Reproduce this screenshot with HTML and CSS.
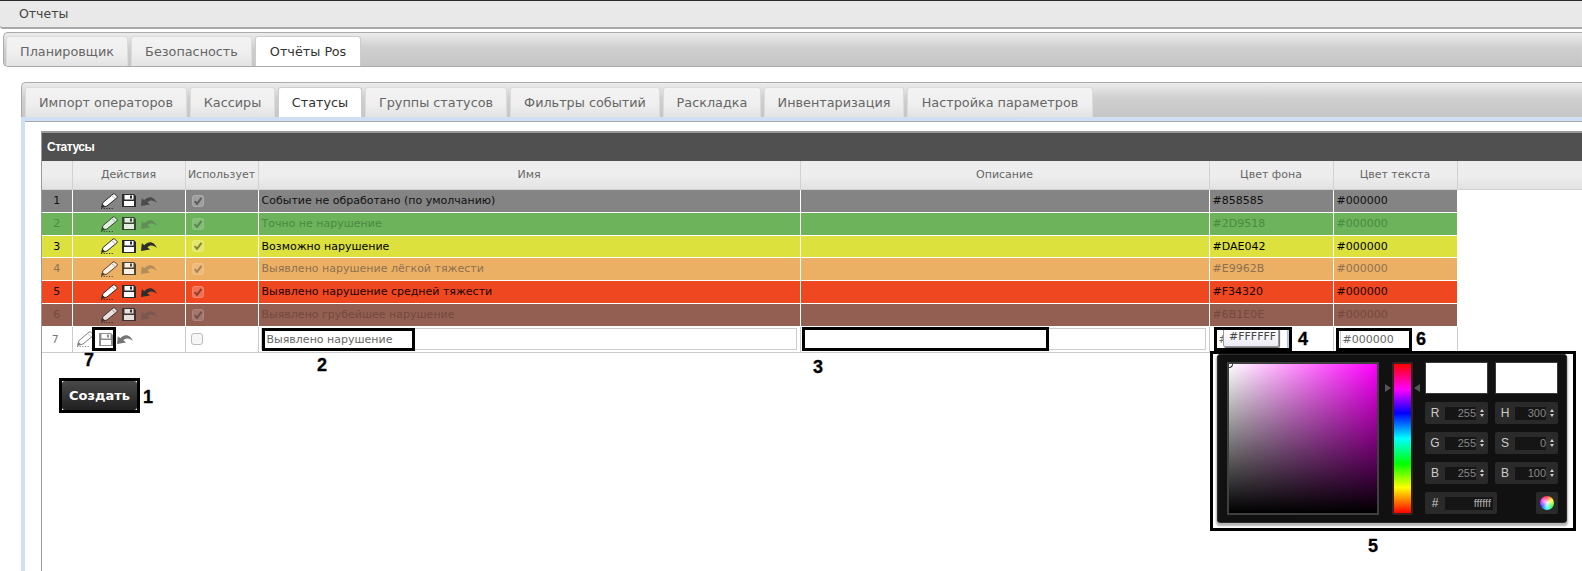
FILE: index.html
```html
<!DOCTYPE html>
<html lang="ru">
<head>
<meta charset="utf-8">
<title>Отчеты</title>
<link rel="stylesheet" href="styles.css">
</head>
<body>
<svg class="defs" width="0" height="0" aria-hidden="true">
  <symbol id="pencil" viewBox="0 0 17 15">
    <path d="M1.500 13.500 2.800 9 12.400.9l1.100-.3 2.800 2.800-.3 1.100L6.500 12.300Z" fill="#fff" stroke="#222" stroke-width=".9"/>
    <path d="M11 2.300l3.400 3" stroke="#999" stroke-width=".8"/>
    <path d="M1 14.500h12" stroke="#222" stroke-width="1" stroke-dasharray="1 1.500"/>
    <path d="M1.500 13.500 2.500 10.500 4.800 12.500Z" fill="#222"/>
  </symbol>
  <symbol id="floppy" viewBox="0 0 14 13">
    <path d="M0 0h12l2 2v11H0Z" fill="currentColor"/>
    <rect x="2.500" y="1" width="9" height="4.500" fill="#fff"/>
    <rect x="8" y="1.500" width="2" height="3" fill="currentColor"/>
    <rect x="2" y="7" width="10" height="5" fill="#fff"/>
  </symbol>
  <symbol id="undo" viewBox="0 0 16 10">
    <path d="M0 10 .8 2.200 3.400 4.200C6 1 12-1.500 16 7c-3-3-7-3.400-9.600-.8L9 8.400Z" fill="currentColor"/>
  </symbol>
  <symbol id="check" viewBox="0 0 12 12">
    <rect x="0.500" y="0.500" width="11" height="11" rx="2" fill="#fff" fill-opacity=".22" stroke="#fff" stroke-opacity=".25"/>
    <path d="M2.700 6.200 5 8.800 9.500 2.800" fill="none" stroke="#000" stroke-opacity=".42" stroke-width="2"/>
  </symbol>
</svg>

<header class="menubar">Отчеты</header>

<nav class="tabs tabs-outer">
  <a class="tab tab-planner">Планировщик</a>
  <a class="tab tab-security">Безопасность</a>
  <a class="tab tab-pos active">Отчёты Pos</a>
</nav>

<main class="workspace">
  <nav class="tabs tabs-inner">
    <a class="tab t1">Импорт операторов</a>
    <a class="tab t2">Кассиры</a>
    <a class="tab t3 active">Статусы</a>
    <a class="tab t4">Группы статусов</a>
    <a class="tab t5">Фильтры событий</a>
    <a class="tab t6">Раскладка</a>
    <a class="tab t7">Инвентаризация</a>
    <a class="tab t8">Настройка параметров</a>
  </nav>

  <section class="panel">
    <div class="card">
      <h2 class="card-title">Статусы</h2>
      <table class="grid">
        <colgroup>
          <col class="c-num"><col class="c-act"><col class="c-use"><col class="c-name"><col class="c-desc"><col class="c-bg"><col class="c-fg"><col class="c-rest">
        </colgroup>
        <thead>
          <tr><th></th><th>Действия</th><th>Использует</th><th>Имя</th><th>Описание</th><th>Цвет фона</th><th>Цвет текста</th><th></th></tr>
        </thead>
        <tbody>
          <tr class="r r1">
            <td class="num">1</td>
            <td class="acts"><svg class="i-pencil"><use href="#pencil"/></svg><svg class="i-floppy"><use href="#floppy"/></svg><svg class="i-undo"><use href="#undo"/></svg></td>
            <td><svg class="chk"><use href="#check"/></svg></td>
            <td>Событие не обработано (по умолчанию)</td><td></td><td>#858585</td><td>#000000</td><td class="blank"></td>
          </tr>
          <tr class="r r2 faded">
            <td class="num">2</td>
            <td class="acts"><svg class="i-pencil"><use href="#pencil"/></svg><svg class="i-floppy"><use href="#floppy"/></svg><svg class="i-undo"><use href="#undo"/></svg></td>
            <td><svg class="chk"><use href="#check"/></svg></td>
            <td>Точно не нарушение</td><td></td><td>#2D9518</td><td>#000000</td><td class="blank"></td>
          </tr>
          <tr class="r r3">
            <td class="num">3</td>
            <td class="acts"><svg class="i-pencil"><use href="#pencil"/></svg><svg class="i-floppy"><use href="#floppy"/></svg><svg class="i-undo"><use href="#undo"/></svg></td>
            <td><svg class="chk"><use href="#check"/></svg></td>
            <td>Возможно нарушение</td><td></td><td>#DAE042</td><td>#000000</td><td class="blank"></td>
          </tr>
          <tr class="r r4 faded">
            <td class="num">4</td>
            <td class="acts"><svg class="i-pencil"><use href="#pencil"/></svg><svg class="i-floppy"><use href="#floppy"/></svg><svg class="i-undo"><use href="#undo"/></svg></td>
            <td><svg class="chk"><use href="#check"/></svg></td>
            <td>Выявлено нарушение лёгкой тяжести</td><td></td><td>#E9962B</td><td>#000000</td><td class="blank"></td>
          </tr>
          <tr class="r r5">
            <td class="num">5</td>
            <td class="acts"><svg class="i-pencil"><use href="#pencil"/></svg><svg class="i-floppy"><use href="#floppy"/></svg><svg class="i-undo"><use href="#undo"/></svg></td>
            <td><svg class="chk"><use href="#check"/></svg></td>
            <td>Выявлено нарушение средней тяжести</td><td></td><td>#F34320</td><td>#000000</td><td class="blank"></td>
          </tr>
          <tr class="r r6 faded">
            <td class="num">6</td>
            <td class="acts"><svg class="i-pencil"><use href="#pencil"/></svg><svg class="i-floppy"><use href="#floppy"/></svg><svg class="i-undo"><use href="#undo"/></svg></td>
            <td><svg class="chk"><use href="#check"/></svg></td>
            <td>Выявлено грубейшее нарушение</td><td></td><td>#6B1E0E</td><td>#000000</td><td class="blank"></td>
          </tr>
          <tr class="r r7">
            <td class="num">7</td>
            <td class="acts-edit"><svg class="i-pencil"><use href="#pencil"/></svg><svg class="i-floppy"><use href="#floppy"/></svg><svg class="i-undo"><use href="#undo"/></svg></td>
            <td><span class="box"></span></td>
            <td><input class="field" type="text" value="Выявлено нарушение"></td>
            <td><input class="field" type="text"></td>
            <td><input class="field field-focus" type="text" value="#FFFFFF"></td>
            <td><input class="field field-fg" type="text" value="#000000"></td>
            <td class="blank"></td>
          </tr>
        </tbody>
      </table>
      <div class="create-row"><span class="create-frame"><button class="create" type="button">Создать</button></span></div>
    </div>
  </section>
</main>

<div class="tooltip">#FFFFFF</div>

<aside class="picker">
  <div class="picker-body">
    <div class="sat"><span class="sat-dot"></span></div>
    <div class="hue-wrap"><span class="arr arr-l"></span><div class="hue"></div><span class="arr arr-r"></span></div>
    <div class="controls">
      <div class="swatch"></div><div class="swatch"></div>
      <div class="pf"><b>R</b><i>255</i><u></u></div><div class="pf"><b>H</b><i>300</i><u></u></div>
      <div class="pf"><b>G</b><i>255</i><u></u></div><div class="pf"><b>S</b><i>0</i><u></u></div>
      <div class="pf"><b>B</b><i>255</i><u></u></div><div class="pf"><b>B</b><i>100</i><u></u></div>
      <div class="hexline">
        <div class="pf pf-hex"><b>#</b><i>ffffff</i></div>
        <div class="wheel-btn"><span class="wheel"></span></div>
      </div>
    </div>
  </div>
</aside>

<span class="mark m-save"></span>
<span class="mark m-name"></span>
<span class="mark m-desc"></span>
<span class="mark m-bg"></span>
<span class="mark m-fg"></span>

<span class="note n1">1</span>
<span class="note n2">2</span>
<span class="note n3">3</span>
<span class="note n4">4</span>
<span class="note n5">5</span>
<span class="note n6">6</span>
<span class="note n7">7</span>
</body>
</html>
```
FILE: styles.css
```css
* { box-sizing: border-box; }
html, body { margin: 0; height: 100%; }
body {
  position: relative;
  width: 1582px;
  height: 571px;
  overflow: hidden;
  background: #fff;
  font: 11px "DejaVu Sans", Verdana, sans-serif;
  color: #333;
}
.defs { position: absolute; }

.menubar {
  height: 29px;
  border-top: 1px solid #2a2a2a;
  border-bottom: 2px solid #a9a9a9;
  border-bottom-left-radius: 3px;
  background: #e9e9e9;
  padding: 5px 0 0 19px;
  font-size: 12.500px;
  color: #444;
}

.tabs {
  display: flex;
  align-items: flex-end;
  border: 1px solid #ababab;
  border-right: 0;
  background: linear-gradient(#ececec, #cfcfcf 45%, #c6c6c6);
}
.tabs-outer {
  height: 35px;
  margin: 3px 0 0 3px;
  padding-left: 2px;
  border-radius: 5px 0 0 5px;
}
.workspace { margin: 15px 0 0 21px; }
.tabs-inner {
  height: 35px;
  padding-left: 3px;
  border-bottom: 0;
  border-radius: 5px 0 0 0;
}
.tab {
  display: flex;
  align-items: center;
  justify-content: center;
  height: 30px;
  margin-right: 3px;
  border: 1px solid #dcdcdc;
  border-bottom: 0;
  border-radius: 3px 3px 0 0;
  background: linear-gradient(#f3f3f3, #efefef 55%, #e3e3e3);
  font-size: 12.800px;
  color: #666;
  white-space: nowrap;
}
.tab.active { background: #fff; color: #333; border-color: #ccc; }
.tab-planner { width: 122px; }
.tab-security { width: 121px; }
.tab-pos { width: 106px; }
.t1 { width: 162px; }
.t2 { width: 85px; }
.t3 { width: 84px; }
.t4 { width: 142px; }
.t5 { width: 150px; }
.t6 { width: 98px; }
.t7 { width: 140px; }
.t8 { width: 186px; }

.panel {
  border-left: 4px solid #cfe0f4;
  border-top: 4px solid #cfe0f4;
  height: 460px;
  padding: 10px 0 0 16px;
  box-shadow: inset 0 1px 0 #a8a8a8;
}

.card {
  height: 460px;
  border-top: 2px solid #9a9a9a;
  border-left: 1px solid #9a9a9a;
}
.card-title {
  margin: 0;
  height: 28px;
  padding: 7px 0 0 5px;
  background: #505050;
  font: bold 12px "Liberation Sans", Arial, sans-serif;
  letter-spacing: -.5px;
  color: #fff;
}

.grid {
  width: 1540px;
  table-layout: fixed;
  border-collapse: collapse;
}
.c-num { width: 30px; }
.c-act { width: 113px; }
.c-use { width: 73px; }
.c-name { width: 542px; }
.c-desc { width: 409px; }
.c-bg { width: 124px; }
.c-fg { width: 124px; }
.c-rest { width: 125px; }

.grid th {
  height: 28px;
  padding: 0;
  border: 1px solid #d2d2d2;
  border-top: 0;
  background: linear-gradient(#ececec, #eeeeee 50%, #e2e2e2);
  font-weight: normal;
  color: #666;
  text-align: center;
}
.grid th:first-child { border-left: 0; }
.grid td {
  padding: 0 0 0 3px;
  border: 1px solid rgba(255, 255, 255, .2);
  border-top: 0;
  white-space: nowrap;
  overflow: hidden;
}
.grid td:first-child { border-left: 0; }
.grid td.blank { background: #fff; border: 0; }
.r { height: 23px; }
.r3 { height: 22px; }
.r1 { background: #848484; color: #111; }
.r2 { background: #6db35c; color: #4a8a41; }
.r3 { background: #dce13d; color: #000; }
.r4 { background: #ecb065; color: #8c7150; }
.r5 { background: #ef4820; color: #1a0500; }
.r6 { background: #935f52; color: #74493e; }
.r7 { height: 26px; background: #fff; color: #777; }
.r7 td { border: 1px solid #ccc; border-top: 0; padding: 0 3px 0 2px; }
.r7 td:first-child { padding-left: 3px; }
.grid td.num { text-align: center; padding-left: 0; }

.acts { padding-left: 27px !important; }
.acts svg, .acts-edit svg { display: inline-block; vertical-align: middle; color: #2a2a2a; }
.acts .i-undo { color: #4c4c4c; }
.r3 .i-undo, .r5 .i-undo { color: #2e2e2e; }
.faded .acts svg { opacity: .8; }
.faded .acts .i-undo { opacity: .35; }
.i-pencil { width: 18px; height: 16px; }
.i-floppy { width: 14px; height: 13px; margin-left: 4px; }
.i-undo { width: 16px; height: 10px; margin-left: 5px; }
.acts-edit { padding-left: 3px !important; }
.acts-edit svg { opacity: .6; }
.acts-edit .i-floppy { margin-left: 5px; opacity: 1; color: #8f8f8f; }
.acts-edit .i-undo { margin-left: 4px; opacity: .8; color: #555; }
.chk { display: block; width: 12px; height: 12px; margin-left: 3px; }
.faded .chk { opacity: .7; }
.box {
  display: block;
  width: 12px;
  height: 12px;
  margin-left: 3px;
  border: 1px solid #bbb;
  border-radius: 3px;
  background: #f6f6f6;
}
.field {
  display: block;
  width: 100%;
  height: 22px;
  padding: 0 3px 0 5px;
  border: 1px solid #ccc;
  font: 11px "DejaVu Sans", Verdana, sans-serif;
  color: #666;
  background: #fff;
  outline: 0;
}
.field-focus { width: 72px; margin-left: 4px; padding-left: 2px; border-color: #aac0e6; box-shadow: 1px 0 2px #9db7e4; }
.field-fg { width: 72px; margin-left: 4px; padding-left: 2px; }

.create-row { padding: 25px 0 0 17px; }
.create-frame { display: inline-block; border: 3px solid #000; background: #fff; height: 35px; }
.create {
  display: block;
  width: 75px;
  height: 29px;
  padding: 0;
  border: 0;
  border-radius: 3px;
  background: linear-gradient(#4a4a4a, #1f1f1f);
  font: bold 13px "DejaVu Sans", Verdana, sans-serif;
  color: #fff;
}

.tooltip {
  position: absolute;
  left: 1223px;
  top: 328px;
  width: 56px;
  height: 19px;
  padding-left: 5px;
  border: 1px solid #999;
  border-radius: 2px;
  background: linear-gradient(#fff, #ecebf6);
  box-shadow: 1px 1px 1px #666;
  line-height: 16px;
  font-size: 11px;
  color: #444;
}

.picker {
  position: absolute;
  left: 1210px;
  top: 351px;
  width: 366px;
  height: 180px;
  border: 3px solid #000;
  background: #fff;
  padding: 0 6px 5px 4px;
}
.picker-body {
  display: flex;
  height: 169px;
  padding: 7px 8px 8px 9px;
  border: 1px solid #2c2c2c;
  border-radius: 3px;
  background: #111;
  box-shadow: 0 2px 2px 1px #b5b5b5;
}
.sat {
  position: relative;
  width: 153px;
  height: 153px;
  border: 2px solid #3f3f3f;
  overflow: hidden;
  background: linear-gradient(transparent, #000), linear-gradient(to right, #fff, #f0f);
}
.sat-dot {
  position: absolute;
  left: -3px;
  top: -3px;
  width: 7px;
  height: 7px;
  border: 1px solid #000;
  border-radius: 50%;
}
.hue-wrap {
  position: relative;
  width: 46px;
  padding: 0 12px 0 13px;
}
.hue {
  width: 21px;
  height: 153px;
  border: 2px solid #3a2020;
  border-radius: 2px;
  background: linear-gradient(#f00, #f0f 17%, #00f 33%, #0ff 50%, #0f0 67%, #ff0 83%, #f00);
}
.arr {
  position: absolute;
  top: 22px;
  border-top: 4.500px solid transparent;
  border-bottom: 4.500px solid transparent;
}
.arr-l { left: 6px; border-left: 6px solid #555; }
.arr-r { right: 5px; border-right: 6px solid #555; }
.controls {
  display: grid;
  grid-template-columns: 63px 63px;
  grid-template-rows: 32px repeat(4, 22px);
  column-gap: 7px;
  row-gap: 8px;
  height: 153px;
}
.swatch { background: #fff; border: 1px solid #3a3a3a; }
.pf {
  display: flex;
  align-items: center;
  position: relative;
  height: 22px;
  background: #2a2a2a;
  border-radius: 2px;
}
.pf b {
  width: 20px;
  text-align: center;
  font: 12px "Liberation Sans", Arial, sans-serif;
  color: #ccc;
}
.pf i {
  width: 31px;
  height: 13px;
  background: #151515;
  font: 11px/13px "Liberation Sans", Arial, sans-serif;
  text-align: right;
  color: #888;
}
.pf u {
  position: absolute;
  right: 4px;
  top: 7px;
  width: 0;
  height: 3px;
  border-left: 2.500px solid transparent;
  border-right: 2.500px solid transparent;
  border-bottom: 3px solid #ccc;
}
.pf u::after {
  content: "";
  position: absolute;
  left: -2.500px;
  top: 5px;
  border-left: 2.500px solid transparent;
  border-right: 2.500px solid transparent;
  border-top: 3px solid #ccc;
}
.hexline {
  grid-column: 1 / 3;
  display: flex;
  justify-content: space-between;
}
.pf-hex { width: 72px; }
.pf-hex i { width: 48px; padding-right: 2px; color: #aaa; }
.wheel-btn {
  display: flex;
  align-items: center;
  justify-content: center;
  width: 22px;
  height: 22px;
  background: #2a2a2a;
  border-radius: 2px;
}
.wheel {
  width: 14px;
  height: 14px;
  border-radius: 50%;
  background: radial-gradient(rgba(255, 255, 255, .9), rgba(255, 255, 255, 0) 70%),
    conic-gradient(#f33, #ff3, #3f3, #3ff, #33f, #f3f, #f33);
}

.mark { position: absolute; border: 3px solid #000; }
.m-save { left: 92px; top: 327px; width: 24px; height: 24px; }
.m-name { left: 262px; top: 328px; width: 153px; height: 23px; }
.m-desc { left: 802px; top: 327px; width: 247px; height: 24px; }
.m-bg { left: 1214px; top: 327px; width: 78px; height: 24px; }
.m-fg { left: 1336px; top: 328px; width: 76px; height: 23px; }

.note {
  position: absolute;
  font: bold 18px/18px "Liberation Sans", Arial, sans-serif;
  -webkit-text-stroke: .3px #000;
  color: #000;
}
.n1 { left: 143px; top: 388px; }
.n2 { left: 317px; top: 356px; }
.n3 { left: 813px; top: 358px; }
.n4 { left: 1298px; top: 330px; }
.n5 { left: 1368px; top: 537px; }
.n6 { left: 1416px; top: 330px; }
.n7 { left: 84px; top: 351px; }
```
